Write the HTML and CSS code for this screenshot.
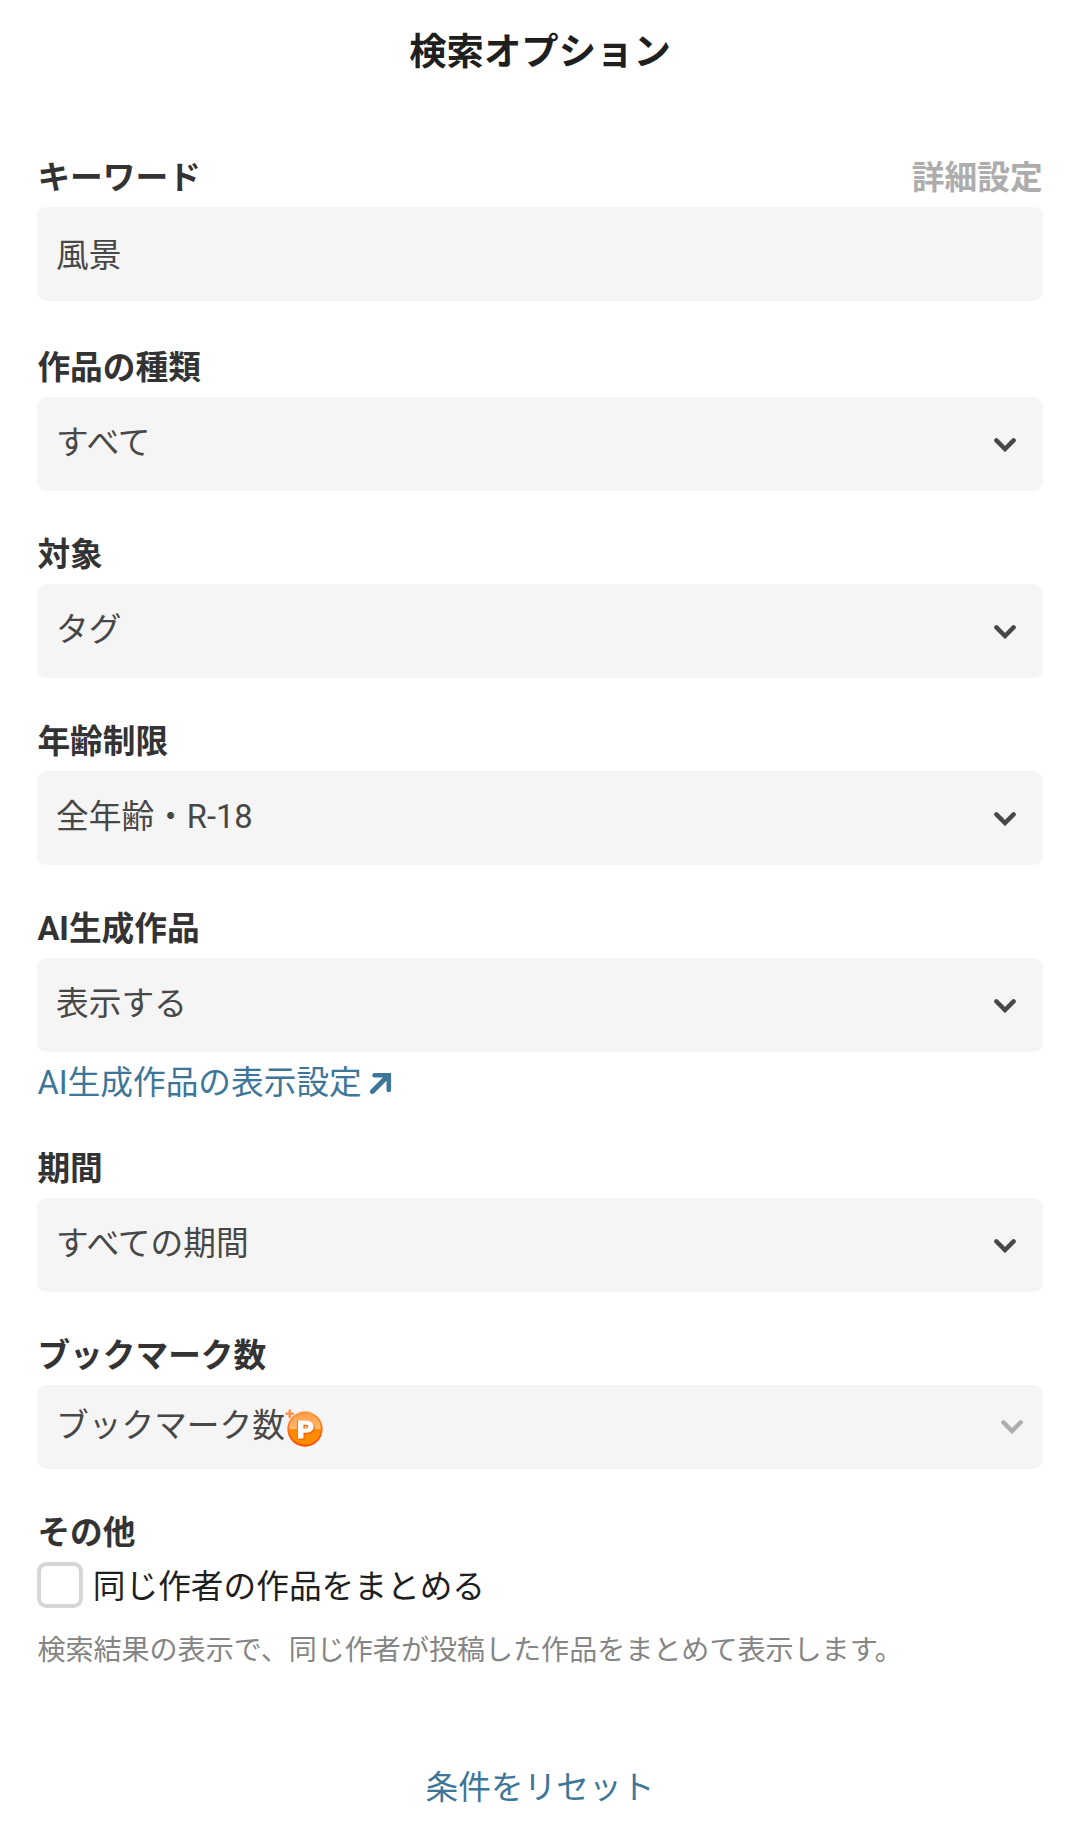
FILE: index.html
```html
<!DOCTYPE html>
<html lang="ja">
<head>
  <meta charset="UTF-8" />
  <meta name="viewport" content="width=device-width, initial-scale=1" />
  <title>検索オプション</title>
  <link rel="stylesheet" href="styles.css">
</head>
<body>
  <svg class="defs" width="0" height="0" aria-hidden="true">
    <symbol id="chevron" viewBox="0 0 22 14">
      <path d="M2.4 2.4 11 11 19.6 2.4" fill="none" stroke="currentColor" stroke-width="4.4" stroke-linecap="round" />
    </symbol>
  </svg>

  <header class="header">
    <h1>検索オプション</h1>
  </header>

  <main class="options">
    <section class="section section-keyword">
      <div class="label-row">
        <h2 class="label">キーワード</h2>
        <span class="label detail">詳細設定</span>
      </div>
      <div class="field input">風景</div>
    </section>

    <section class="section">
      <h2 class="label">作品の種類</h2>
      <div class="field"><span>すべて</span><svg class="chevron"><use href="#chevron" /></svg></div>
    </section>

    <section class="section">
      <h2 class="label">対象</h2>
      <div class="field"><span>タグ</span><svg class="chevron"><use href="#chevron" /></svg></div>
    </section>

    <section class="section">
      <h2 class="label">年齢制限</h2>
      <div class="field"><span>全年齢・R-18</span><svg class="chevron"><use href="#chevron" /></svg></div>
    </section>

    <section class="section section-ai">
      <h2 class="label">AI生成作品</h2>
      <div class="field"><span>表示する</span><svg class="chevron"><use href="#chevron" /></svg></div>
      <a class="link" href="#">AI生成作品の表示設定
        <svg class="arrow" viewBox="0 0 22 22">
          <path d="M2.4 19.4 17 4.8" fill="none" stroke="currentColor" stroke-width="5" stroke-linecap="round" />
          <path d="M4.5 3.2H18.8V18" fill="none" stroke="currentColor" stroke-width="4.6" stroke-linecap="round" />
        </svg>
      </a>
    </section>

    <section class="section">
      <h2 class="label">期間</h2>
      <div class="field"><span>すべての期間</span><svg class="chevron"><use href="#chevron" /></svg></div>
    </section>

    <section class="section section-bookmark">
      <h2 class="label">ブックマーク数</h2>
      <div class="field premium">
        <span>ブックマーク数</span>
        <svg class="premium-icon" viewBox="0 0 38 38">
          <defs>
            <linearGradient id="rim" x1="0" y1="0" x2="0" y2="1">
              <stop offset="0" stop-color="#ff9a4a" />
              <stop offset="1" stop-color="#ff4500" />
            </linearGradient>
            <linearGradient id="shine" x1="0" y1="0" x2="0" y2="1">
              <stop offset="0" stop-color="#ff9c48" />
              <stop offset="1" stop-color="#ffbd70" />
            </linearGradient>
          </defs>
          <circle cx="20" cy="20" r="17.7" fill="url(#rim)" />
          <circle cx="20" cy="20" r="15.8" fill="#ff8c00" />
          <path d="M4.2 20a15.8 15.8 0 0 1 31.6 0Z" fill="url(#shine)" />
          <text transform="translate(20.7 29) scale(1.1 1)" text-anchor="middle" class="premium-letter">P</text>
          <path d="M4.7 .6V9M.5 4.8H8.9" stroke="#ff8f4d" stroke-width="2.4" />
        </svg>
        <svg class="chevron"><use href="#chevron" /></svg>
      </div>
    </section>

    <section class="section">
      <h2 class="label">その他</h2>
      <label class="check">
        <input type="checkbox">
        <span>同じ作者の作品をまとめる</span>
      </label>
      <p class="hint">検索結果の表示で、同じ作者が投稿した作品をまとめて表示します。</p>
    </section>
  </main>

  <div class="reset">
    <a href="#">条件をリセット</a>
  </div>
</body>
</html>
```

FILE: styles.css
```css
* {
  box-sizing: border-box;
}
body {
  margin: 0;
  background-color: #fff;
  color: #1f1f1f;
  font-family: Roboto, "Noto Sans CJK JP", sans-serif;
  font-size: 32.7px;
}
h1, h2, p {
  margin: 0;
}
a {
  color: #3d7699;
  text-decoration: none;
}
.defs {
  position: absolute;
}
.header {
  height: 103px;
  text-align: center;
}
.header h1 {
  font-size: 37.4px;
  font-weight: bold;
  line-height: 105px;
}
.options {
  padding: 49px 37.4px 0;
}
.section {
  margin-bottom: 38.4px;
}
.section-keyword {
  margin-bottom: 41.4px;
}
.label-row {
  display: flex;
  justify-content: space-between;
}
.label {
  margin-bottom: 2px;
  color: #333;
  font-size: 32.7px;
  font-weight: bold;
  line-height: 53px;
}
.detail {
  color: #adadad;
}
.field {
  display: flex;
  align-items: center;
  height: 93.6px;
  padding: 0 26.5px 8px 18.7px;
  border-radius: 9.4px;
  background-color: #f5f5f5;
  color: #474747;
}
.input {
  padding-bottom: 2px;
}
.chevron {
  position: relative;
  top: 5px;
  width: 22px;
  height: 14px;
  margin-left: auto;
}
.link {
  display: flex;
  align-items: center;
  gap: 8px;
  height: 48px;
  margin-top: 4px;
}
.arrow {
  position: relative;
  top: 3px;
  width: 22px;
  height: 22px;
}
.section-ai {
  margin-bottom: 39.4px;
}
.premium {
  height: 84px;
  padding: 0 19.5px 8px 18.7px;
}
.premium-icon {
  position: relative;
  top: 5.5px;
  width: 38px;
  height: 38px;
}
.premium-letter {
  fill: #fff;
  stroke: #fff;
  stroke-width: .8px;
  font-family: Roboto, sans-serif;
  font-size: 24px;
  font-weight: 900;
  filter: drop-shadow(-1px 0 0 #ff6a1a) drop-shadow(1px 1px 0 #ff5a0a);
}
.premium .chevron {
  top: 4px;
  color: #adadad;
}
.check {
  display: flex;
  align-items: center;
  gap: 9.4px;
  height: 46px;
}
.check input {
  appearance: none;
  width: 46px;
  height: 46px;
  margin: 0;
  border: 4px solid #d6d6d6;
  border-radius: 9.4px;
  background-color: #fff;
}
.check span {
  padding-bottom: 3px;
}
.hint {
  margin-top: 20px;
  color: #858585;
  font-size: 28.05px;
  line-height: 46px;
}
.reset {
  margin-top: 88px;
  text-align: center;
  line-height: 52px;
}
```
